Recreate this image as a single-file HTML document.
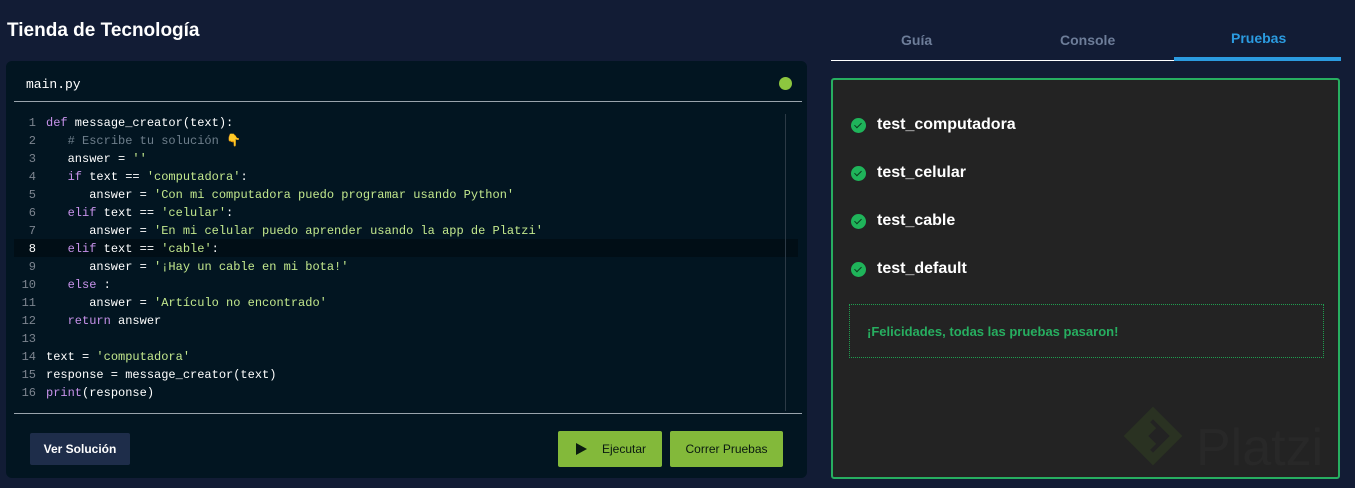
<!DOCTYPE html>
<html><head><meta charset="utf-8"><style>
*{margin:0;padding:0;box-sizing:border-box}
body{width:1355px;height:488px;background:#121c35;font-family:"Liberation Sans",sans-serif;position:relative;overflow:hidden}
.title{position:absolute;left:7px;top:20px;color:#fff;font-weight:bold;font-size:19px}
.ed{position:absolute;left:6px;top:61px;width:801px;height:417px;background:#021521;border-radius:6px}
.fname{position:absolute;left:20px;top:16px;color:#fff;font:13px "Liberation Mono",monospace}
.dot{position:absolute;left:773px;top:16px;width:13px;height:13px;border-radius:50%;background:#8dc63f}
.hl{position:absolute;left:8px;height:1px;width:788px;background:#9aa4ad}
.code{position:absolute;left:0;top:53px;font:12px/18px "Liberation Mono",monospace;color:#fff;white-space:pre}
.ln{display:inline-block;width:40px;text-align:right;color:#7d8590;padding-right:10px}
.k{color:#c792ea}.s{color:#c3e88d}.c{color:#6f7f8c}
.cur{position:absolute;left:8px;top:178px;width:784px;height:18px;background:#010e16}
.vbar{position:absolute;left:779px;top:53px;width:1px;height:297px;background:#2c3a46}
.btn{position:absolute;font-size:12px;font-weight:bold;color:#fff;display:flex;align-items:center;justify-content:center;border-radius:2px}
.tabs{position:absolute;left:831px;top:0;width:510px;height:62px}
.tab{position:absolute;top:32px;font-size:14px;font-weight:bold;color:#6d7d99}
.panel{position:absolute;left:831px;top:78px;width:509px;height:401px;background:#232323;border:2px solid #27ae60;border-radius:3px}
.t{position:absolute;left:18px;display:flex;align-items:center;color:#fff;font-weight:bold;font-size:16px}
.t i{width:15px;height:15px;border-radius:50%;background:#1fb45a;margin-right:11px;display:inline-block;position:relative}
.t i:after{content:"";position:absolute;left:5px;top:3px;width:3px;height:6px;border:solid #0b3d1f;border-width:0 1.5px 1.5px 0;transform:rotate(45deg)}
.msg{position:absolute;left:16px;top:224px;width:475px;height:54px;border:1px dotted #27ae60;color:#27ae60;font-weight:bold;font-size:13px;padding:19px 17px}
</style></head><body>
<div class="title">Tienda de Tecnología</div>
<div class="ed">
<div class="fname">main.py</div><div class="dot"></div>
<div class="hl" style="top:40px"></div>
<div class="cur"></div>
<div class="vbar"></div>
<div class="code"><span class="ln">1</span><span class="k">def</span> message_creator(text):
<span class="ln">2</span>   <span class="c"># Escribe tu solución 👇</span>
<span class="ln">3</span>   answer = <span class="s">''</span>
<span class="ln">4</span>   <span class="k">if</span> text == <span class="s">'computadora'</span>:
<span class="ln">5</span>      answer = <span class="s">'Con mi computadora puedo programar usando Python'</span>
<span class="ln">6</span>   <span class="k">elif</span> text == <span class="s">'celular'</span>:
<span class="ln">7</span>      answer = <span class="s">'En mi celular puedo aprender usando la app de Platzi'</span>
<span class="ln" style="color:#fff">8</span>   <span class="k">elif</span> text == <span class="s">'cable'</span>:
<span class="ln">9</span>      answer = <span class="s">'¡Hay un cable en mi bota!'</span>
<span class="ln">10</span>   <span class="k">else</span> :
<span class="ln">11</span>      answer = <span class="s">'Artículo no encontrado'</span>
<span class="ln">12</span>   <span class="k">return</span> answer
<span class="ln">13</span>
<span class="ln">14</span>text = <span class="s">'computadora'</span>
<span class="ln">15</span>response = message_creator(text)
<span class="ln">16</span><span class="k">print</span>(response)</div>
<div class="hl" style="top:352px"></div>
<div class="btn" style="left:24px;top:372px;width:100px;height:32px;background:#1e2d4a">Ver Solución</div>
<div class="btn" style="left:552px;top:370px;width:104px;height:36px;background:#83b93a;font-weight:normal"><svg width="14" height="14" viewBox="0 0 14 14" style="margin-right:14px"><path d="M2 1L13 7L2 13Z" fill="#0a1a10"/></svg><span style="color:#0a1a10">Ejecutar</span></div>
<div class="btn" style="left:664px;top:370px;width:113px;height:36px;background:#83b93a;color:#0a1a10;font-weight:normal">Correr Pruebas</div>
</div>
<div class="tabs">
<div class="tab" style="left:70px">Guía</div>
<div class="tab" style="left:229px">Console</div>
<div class="tab" style="left:400px;top:30px;color:#2b9be0">Pruebas</div>
<div style="position:absolute;left:0;top:60px;width:343px;height:1px;background:#fff"></div>
<div style="position:absolute;left:343px;top:57px;width:167px;height:4px;background:#2b9be0"></div>
</div>
<div class="panel">
<div class="t" style="top:36px"><i></i>test_computadora</div>
<div class="t" style="top:84px"><i></i>test_celular</div>
<div class="t" style="top:132px"><i></i>test_cable</div>
<div class="t" style="top:180px"><i></i>test_default</div>
<div class="msg" style="border-color:#1f9e4f">¡Felicidades, todas las pruebas pasaron!</div>
<svg style="position:absolute;left:283px;top:325px" width="230" height="75"><path d="M37 8L60 31L37 54L14 31Z M37 20L26 31L37 42" fill="none" stroke="#2a3222" stroke-width="9"/><text x="80" y="60" font-size="52" fill="#282828" font-family="Liberation Sans">Platzi</text></svg>
</div>
</body></html>
